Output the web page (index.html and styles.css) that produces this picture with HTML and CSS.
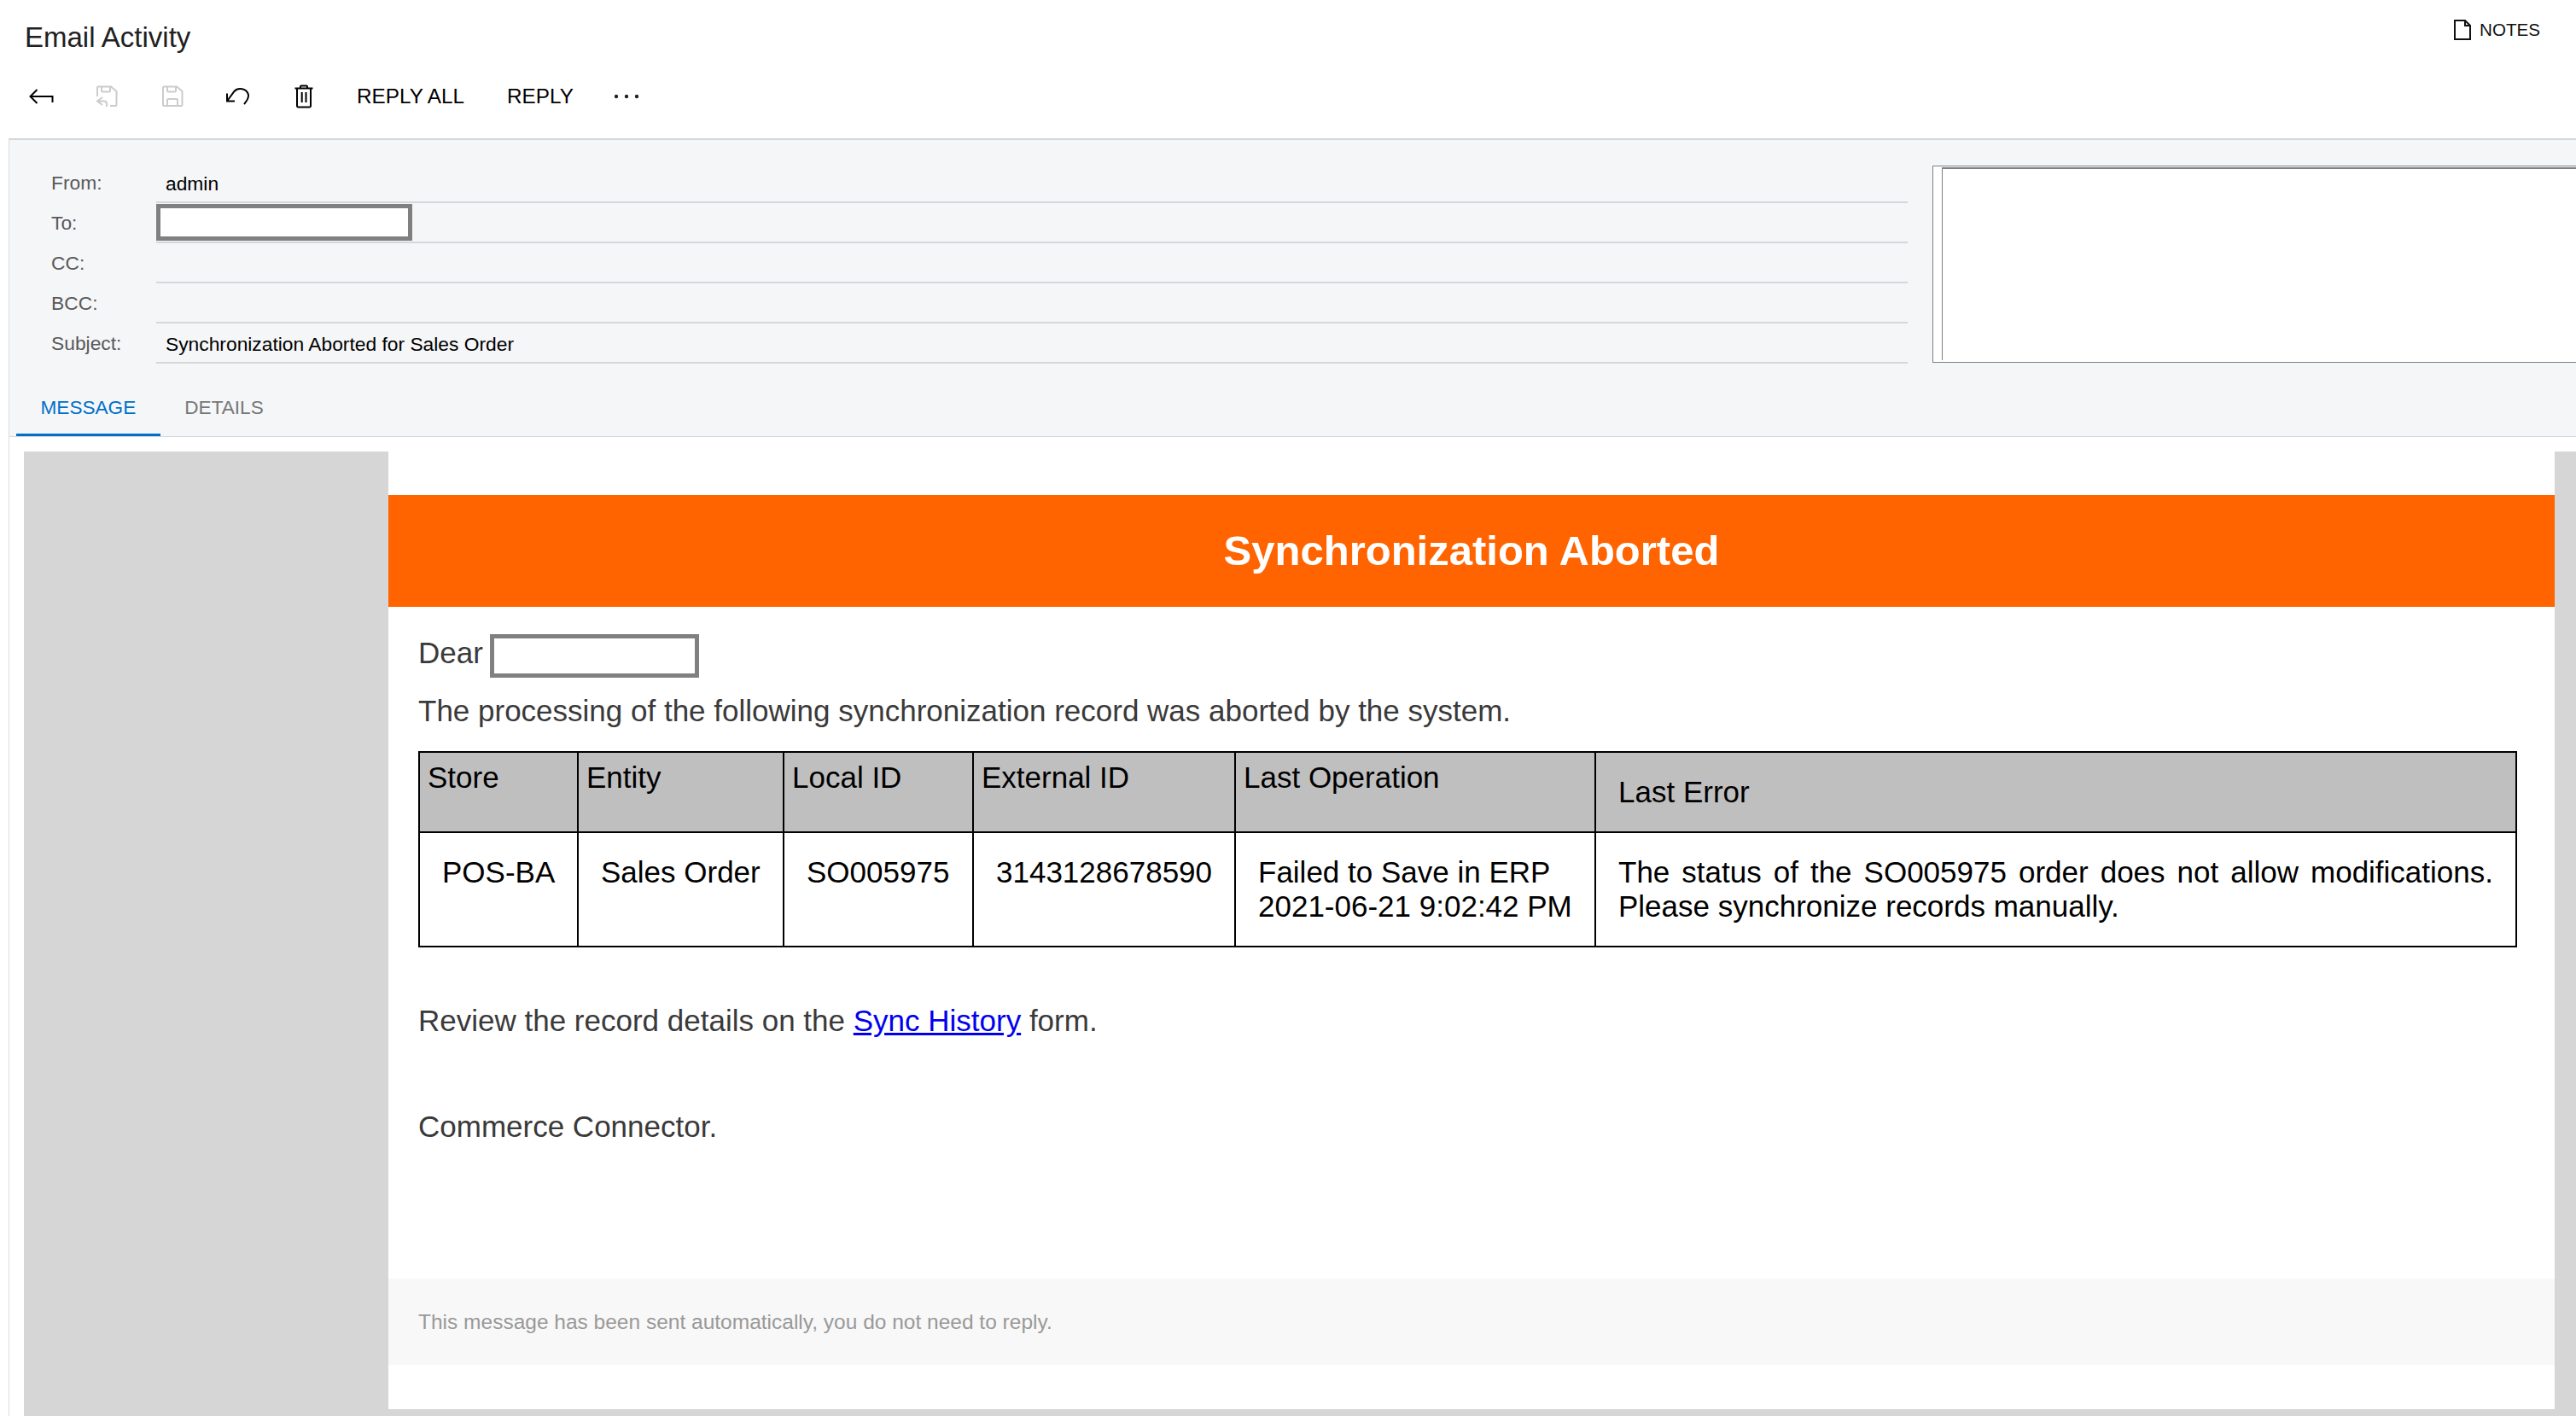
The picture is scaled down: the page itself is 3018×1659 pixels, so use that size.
FILE: index.html
```html
<!DOCTYPE html>
<html lang="en">
<head>
<meta charset="utf-8">
<title>Email Activity</title>
<link rel="stylesheet" href="styles.css">
</head>
<body>
<header class="top">
  <div class="title-row">
    <h1 class="title">Email Activity</h1>
    <button class="notes">
      <svg class="notes-icon" viewBox="0 0 20 24" width="20" height="24"><path d="M1 1H13L19 7V23H1Z M13 1V7H19"/></svg>
      NOTES
    </button>
  </div>
  <div class="toolbar">
    <span class="tool"><svg viewBox="0 0 30 20" width="30" height="20"><path d="M10.5 2L2.5 10L10.5 18M2.5 10H28.5V17"/></svg></span>
    <span class="tool tool-off"><svg viewBox="0 0 26 26" width="26" height="26"><path d="M2 13V2.5a1 1 0 0 1 1-1H18L24.5 7V23a1 1 0 0 1-1 1H17M7 1.5V6.5a1 1 0 0 0 1 1h8a1 1 0 0 0 1-1V1.5M8 14L2 18.5L8 23M2 18.5H10a3 3 0 0 1 3 3V25"/></svg></span>
    <span class="tool tool-off"><svg viewBox="0 0 26 26" width="26" height="26"><path d="M3 1.5H18L24.5 7V23a1 1 0 0 1-1 1H3a1 1 0 0 1-1-1V2.5a1 1 0 0 1 1-1ZM7 1.5V6.5a1 1 0 0 0 1 1h8a1 1 0 0 0 1-1V1.5M7 24V17a1 1 0 0 1 1-1h10a1 1 0 0 1 1 1v7"/></svg></span>
    <span class="tool"><svg viewBox="0 0 30 22" width="30" height="22"><path d="M2 7.5V16.5H11M2 16.5L10.5 5C15 0 25 1.5 27 9C27.7 13 25 16.5 22 20"/></svg></span>
    <span class="tool"><svg viewBox="0 0 24 28" width="24" height="28"><path d="M1.5 4.5H22.5M8 4.5V2.5a1 1 0 0 1 1-1h6a1 1 0 0 1 1 1v2M4 4.5V25a1.5 1.5 0 0 0 1.5 1.5h13A1.5 1.5 0 0 0 20 25V4.5M9.7 9V21M14.5 9V21"/></svg></span>
    <span class="action action-first">REPLY ALL</span>
    <span class="action">REPLY</span>
    <svg class="more" viewBox="0 0 30 6" width="30" height="6"><circle cx="3" cy="3" r="2.2"/><circle cx="15" cy="3" r="2.2"/><circle cx="27" cy="3" r="2.2"/></svg>
  </div>
</header>

<main class="page">
  <section class="panel">
    <div class="form">
      <div class="fields">
        <div class="row"><span class="label">From:</span><span class="value">admin</span></div>
        <div class="row"><span class="label">To:</span><span class="value"><span class="redact-to"></span></span></div>
        <div class="row"><span class="label">CC:</span><span class="value"></span></div>
        <div class="row"><span class="label">BCC:</span><span class="value"></span></div>
        <div class="row row-last"><span class="label">Subject:</span><span class="value">Synchronization Aborted for Sales Order</span></div>
      </div>
      <div class="frame"><div class="frame-inner"></div></div>
    </div>
    <nav class="tabs">
      <span class="tab tab-active">MESSAGE</span>
      <span class="tab">DETAILS</span>
    </nav>
  </section>

  <section class="message-wrap">
    <article class="message">
      <h2 class="banner">Synchronization Aborted</h2>
      <div class="body">
        <p class="dear"><span class="dear-text">Dear</span><span class="redact-name"></span></p>
        <p class="intro">The processing of the following synchronization record was aborted by the system.</p>
        <table class="records">
          <colgroup>
            <col class="c1"><col class="c2"><col class="c3"><col class="c4"><col class="c5"><col class="c6">
          </colgroup>
          <thead>
            <tr>
              <th>Store</th><th>Entity</th><th>Local ID</th><th class="thin">External ID</th><th>Last Operation</th><th class="thin th-error">Last Error</th>
            </tr>
          </thead>
          <tbody>
            <tr>
              <td>POS-BA</td><td>Sales Order</td><td>SO005975</td><td class="thin">3143128678590</td>
              <td>Failed to Save in ERP<br>2021-06-21 9:02:42 PM</td>
              <td class="thin td-error">The status of the SO005975 order does not allow modifications. Please synchronize records manually.</td>
            </tr>
          </tbody>
        </table>
        <p class="review">Review the record details on the <a href="#">Sync History</a> form.</p>
        <p class="sign">Commerce Connector.</p>
      </div>
      <footer class="foot">This message has been sent automatically, you do not need to reply.</footer>
    </article>
  </section>
</main>
</body>
</html>
```
FILE: styles.css
```css
* { box-sizing: border-box; }
html, body { margin: 0; padding: 0; }
body {
  width: 3018px;
  height: 1659px;
  overflow: hidden;
  background: #fff;
  font-family: "Liberation Sans", Arial, sans-serif;
  color: #000;
}
.top { height: 162px; }
.title-row {
  height: 88px;
  display: flex;
  justify-content: space-between;
  align-items: flex-start;
  padding: 0 42px 0 29px;
}
.title {
  margin: 0;
  font-weight: 400;
  font-size: 33px;
  line-height: 88px;
  color: #212121;
}
.notes {
  margin-top: 23px;
  padding: 0;
  border: 0;
  background: none;
  display: flex;
  align-items: center;
  gap: 10px;
  font: 20.6px/24px "Liberation Sans", Arial, sans-serif;
  color: #111;
}
.notes-icon path { fill: none; stroke: #111; stroke-width: 2; }
.toolbar {
  height: 50px;
  display: flex;
  align-items: center;
  padding-left: 9px;
}
.tool {
  width: 77px;
  height: 50px;
  display: flex;
  align-items: center;
  justify-content: center;
}
.tool svg { fill: none; stroke: #000; stroke-width: 2; }
.tool-off svg { stroke: #ccc; stroke-width: 2; }
.action { font-size: 24.3px; line-height: 50px; margin-right: 50px; color: #000; white-space: nowrap; }
.action-first { margin-left: 24px; }
.more { fill: #222; margin-left: -3px; }

.page {
  margin-left: 10px;
  height: 1497px;
  border-left: 1px solid #dcdde0;
}
.panel {
  height: 350px;
  background: #f5f6f8;
  border-top: 2px solid #d5d7da;
  border-bottom: 1px solid #d5d7da;
  overflow: hidden;
}
.form { display: flex; align-items: flex-start; padding-top: 27px; }
.fields { width: 2224px; flex: none; }
.row {
  height: 47px;
  display: flex;
  align-items: stretch;
  padding-left: 49px;
  font-size: 22.8px;
}
.row-last { height: 47px; }
.label {
  width: 123px;
  flex: none;
  padding-top: 10px;
  line-height: 26px;
  color: #595959;
}
.value {
  flex: 1;
  display: flex;
  align-items: flex-end;
  padding: 0 0 8px 11px;
  line-height: 26px;
  border-bottom: 2px solid #d5d7da;
  color: #000;
}
.redact-to {
  width: 300px;
  height: 43px;
  margin: 0 0 -7px -11px;
  background: #fff;
  border: 5px solid #808080;
}
.frame {
  flex: none;
  width: 900px;
  height: 231px;
  margin: 3px 0 0 29px;
  padding: 1px 0 2px 10px;
  background: #fff;
  border: 1px solid #808080;
}
.frame-inner {
  height: 100%;
  border-top: 2px solid #808080;
  border-left: 1px solid #808080;
}
.tabs {
  display: flex;
  margin-top: 22px;
  padding-left: 8px;
}
.tab {
  height: 65px;
  padding: 0 28.5px;
  font-size: 22.6px;
  line-height: 60px;
  color: #777;
  border-bottom: 5px solid transparent;
}
.tab-active { color: #0070c9; border-bottom-color: #0070c9; }

.message-wrap {
  height: 1147px;
  margin-left: 17px;
  margin-top: 17px;
  padding: 0 25px 8px 427px;
  background: #d6d6d6;
}
.message {
  height: 1122px;
  background: #fff;
  padding-top: 51px;
  display: flex;
  flex-direction: column;
}
.banner {
  margin: 0;
  height: 131px;
  background: #ff6400;
  color: #fff;
  font-size: 49px;
  line-height: 131px;
  font-weight: 700;
  text-align: center;
}
.body {
  padding: 32px 44px 0 35px;
  color: #3a3a3a;
  font-size: 35px;
  line-height: 40px;
}
.body p { margin: 0; }
.dear { height: 51px; display: flex; align-items: flex-start; gap: 8px; }
.dear-text { margin-top: 2px; }
.redact-name {
  width: 245px;
  height: 51px;
  border: 5px solid #808080;
  background: #fff;
}
.body .intro { margin-top: 19px; }
.records {
  width: 2457px;
  margin-top: 27px;
  table-layout: fixed;
  border-collapse: collapse;
  color: #000;
  font-size: 35px;
  line-height: 40px;
}
.c1 { width: 186px; }
.c2 { width: 241px; }
.c3 { width: 222px; }
.c4 { width: 307px; }
.c5 { width: 422px; }
.c6 { width: 1079px; }
.records th, .records td {
  border: 2px solid #000;
}
.records th {
  height: 94px;
  padding: 9px 9px;
  background: #bfbfbf;
  font-weight: 400;
  text-align: left;
  vertical-align: top;
}
.records td {
  height: 132px;
  padding: 26px 26px;
  vertical-align: top;
  white-space: nowrap;
}
.records .thin { border-left-width: 1px; }
.records .th-error { padding: 26px 26px 0; }
.records .td-error { white-space: normal; text-align: justify; }
.body .review { margin-top: 66px; }
.body a { color: #00e; text-decoration: underline; }
.body .sign { margin-top: 84px; }
.foot {
  margin-top: 158px;
  height: 101px;
  padding: 0 35px;
  display: flex;
  align-items: center;
  background: #f8f8f8;
  color: #999;
  font-size: 24.5px;
}
```
